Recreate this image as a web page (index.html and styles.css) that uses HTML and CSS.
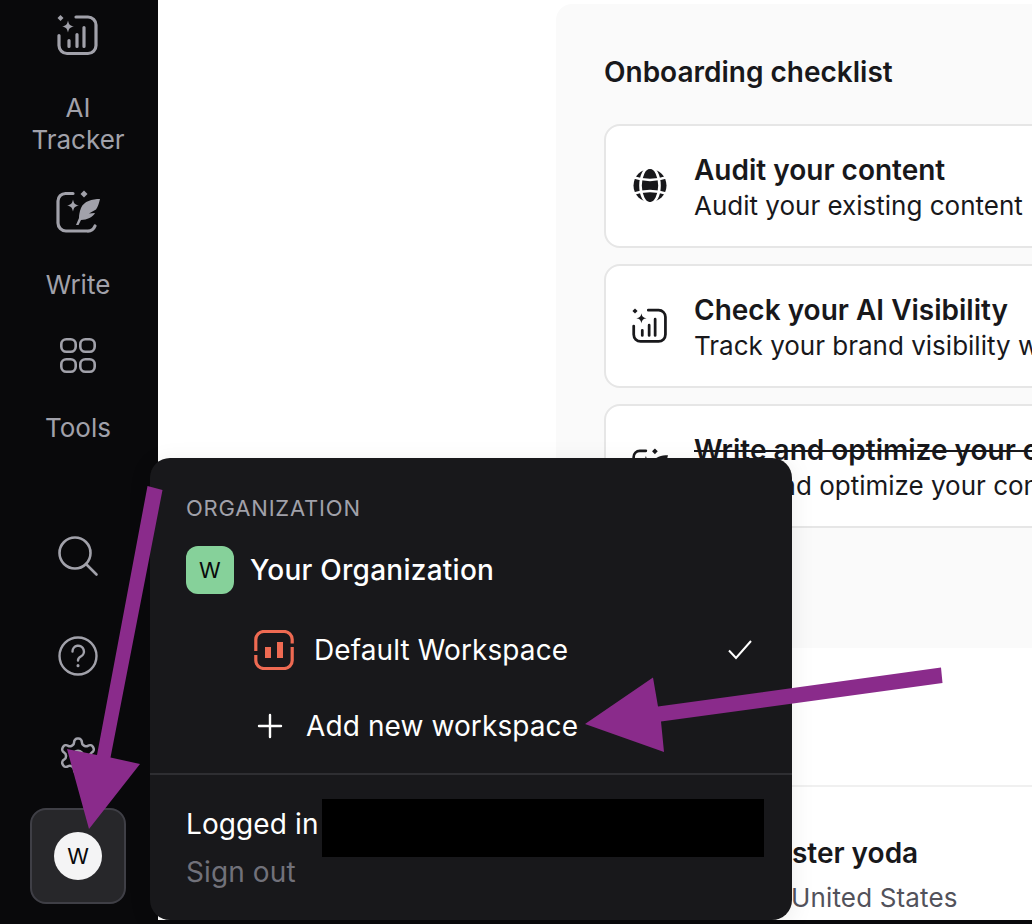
FILE: index.html
```html
<!DOCTYPE html>
<html lang="en">
<head>
<meta charset="utf-8">
<title>Onboarding checklist</title>
<link rel="stylesheet" href="styles.css">
</head>
<body>
<svg class="defs" width="0" height="0" aria-hidden="true">
  <symbol id="i-tracker" viewBox="0 0 42 42">
    <path d="M19 2.500H31a8 8 0 0 1 8 8V31a8 8 0 0 1-8 8H10a8 8 0 0 1-8-8V21" fill="none" stroke="currentColor" stroke-width="3.200" stroke-linecap="round"/>
    <path d="M12 26v6M20 20v12M27 13v19" fill="none" stroke="currentColor" stroke-width="3.200" stroke-linecap="round"/>
    <path d="M11 6c.8 4 2 5.200 6 6-4 .8-5.200 2-6 6-.8-4-2-5.200-6-6 4-.8 5.200-2 6-6z" fill="currentColor"/>
    <path d="M3.500 .5l3 3-3 3-3-3z" fill="currentColor"/>
  </symbol>
  <symbol id="i-write" viewBox="0 0 44 44">
    <path d="M17 3.500H9.500a7.500 7.500 0 0 0-7.500 7.500V33a8 8 0 0 0 8 8h21a8 8 0 0 0 8-5" fill="none" stroke="currentColor" stroke-width="3.200" stroke-linecap="round"/>
    <path d="M17 9.500c.8 4 2 5.200 6 6-4 .8-5.200 2-6 6-.8-4-2-5.200-6-6 4-.8 5.200-2 6-6z" fill="currentColor"/>
    <path d="M28 .5l3.500 3.500-3.500 3.500-3.500-3.500z" fill="currentColor"/>
    <path d="M44 9C36 9 28 11 25 18c-1.500 4-2 7-2 10l-3 7h2.500l2.500-5c6 0 12-3 14-7l-6 .5 7-4c2-3 3-6 4-10.500z" fill="currentColor"/>
  </symbol>
</svg>

<div class="app">
  <aside class="sidebar">
    <nav class="nav">
      <a class="nav-item">
        <svg class="nav-icon" width="42" height="43"><use href="#i-tracker"/></svg>
        <span class="nav-label">AI<br>Tracker</span>
      </a>
      <a class="nav-item">
        <svg class="nav-icon" width="44" height="44"><use href="#i-write"/></svg>
        <span class="nav-label">Write</span>
      </a>
      <a class="nav-item">
        <svg class="nav-icon" width="40" height="42" viewBox="0 0 40 42" fill="none" stroke="currentColor" stroke-width="2.600">
          <rect x="3.300" y="4.300" width="14.400" height="12.400" rx="5"/>
          <rect x="22.300" y="4.300" width="14.400" height="12.400" rx="5"/>
          <rect x="3.300" y="24.300" width="14.400" height="12.400" rx="5"/>
          <rect x="22.300" y="24.300" width="14.400" height="12.400" rx="5"/>
        </svg>
        <span class="nav-label">Tools</span>
      </a>
    </nav>
    <div class="side-tools">
      <svg class="tool-icon" width="42" height="42" viewBox="0 0 42 42" fill="none" stroke="currentColor" stroke-width="2.600" stroke-linecap="round">
        <circle cx="18" cy="18" r="15.500"/><path d="M29 29l10.500 10.500"/>
      </svg>
      <svg class="tool-icon" width="42" height="42" viewBox="0 0 42 42" fill="none" stroke="currentColor" stroke-width="2.400" stroke-linecap="round">
        <circle cx="21" cy="21" r="18.500"/>
        <path d="M15.500 16.500a5.700 5.700 0 1 1 8.300 5c-1.800 1-2.800 2-2.800 4"/>
        <path d="M21 30.500v.2" stroke-width="3"/>
      </svg>
      <svg class="tool-icon" width="42" height="42" viewBox="0 0 24 24" fill="none" stroke="currentColor" stroke-width="1.450">
        <path d="M12.220 2h-.44a2 2 0 0 0-2 2v.18a2 2 0 0 1-1 1.730l-.43.250a2 2 0 0 1-2 0l-.15-.08a2 2 0 0 0-2.730.73l-.22.380a2 2 0 0 0 .73 2.730l.15.100a2 2 0 0 1 1 1.720v.510a2 2 0 0 1-1 1.740l-.15.090a2 2 0 0 0-.73 2.730l.22.380a2 2 0 0 0 2.730.73l.15-.08a2 2 0 0 1 2 0l.43.250a2 2 0 0 1 1 1.730V20a2 2 0 0 0 2 2h.44a2 2 0 0 0 2-2v-.18a2 2 0 0 1 1-1.730l.43-.25a2 2 0 0 1 2 0l.15.08a2 2 0 0 0 2.730-.73l.22-.39a2 2 0 0 0-.73-2.730l-.15-.08a2 2 0 0 1-1-1.740v-.5a2 2 0 0 1 1-1.740l.15-.09a2 2 0 0 0 .73-2.730l-.22-.38a2 2 0 0 0-2.730-.73l-.15.08a2 2 0 0 1-2 0l-.43-.25a2 2 0 0 1-1-1.730V4a2 2 0 0 0-2-2z"/>
        <circle cx="12" cy="12" r="3"/>
      </svg>
      <button class="ws-button"><span class="ws-avatar">W</span></button>
    </div>
  </aside>

  <main class="main">
    <section class="checklist">
      <h2 class="checklist-title">Onboarding checklist</h2>
      <div class="card">
        <svg class="card-icon" width="36" height="36" viewBox="0 0 36 36">
          <circle cx="18" cy="17.500" r="16.500" fill="#18181b"/>
          <g fill="none" stroke="#fff" stroke-width="2.600">
            <ellipse cx="18" cy="17.500" rx="9.500" ry="18"/>
            <path d="M0 9Q18 15 36 9M0 26Q18 20 36 26"/>
          </g>
        </svg>
        <div class="card-text">
          <div class="card-title">Audit your content</div>
          <div class="card-sub">Audit your existing content</div>
        </div>
      </div>
      <div class="card">
        <svg class="card-icon" width="36" height="36"><use href="#i-tracker"/></svg>
        <div class="card-text">
          <div class="card-title">Check your AI Visibility</div>
          <div class="card-sub">Track your brand visibility with AI search engines</div>
        </div>
      </div>
      <div class="card">
        <svg class="card-icon" width="36" height="36"><use href="#i-write"/></svg>
        <div class="card-text">
          <div class="card-title card-done">Write and optimize your content</div>
          <div class="card-sub">Write and optimize your content with AI assistance</div>
        </div>
      </div>
    </section>
    <section class="person">
      <div class="person-name">Master yoda</div>
      <div class="person-loc">United States</div>
    </section>
  </main>

  <div class="popup">
    <div class="popup-top">
      <div class="popup-label">ORGANIZATION</div>
      <div class="org-row">
        <span class="org-tile">W</span>
        <span class="org-name">Your Organization</span>
      </div>
      <div class="ws-row">
        <svg width="40" height="40" viewBox="0 0 40 40" fill="none" stroke="#ee6a52" stroke-width="3.200" stroke-linecap="butt">
          <path d="M1.800 21V9.500a8 8 0 0 1 8-8H30.200a8 8 0 0 1 8 8v4"/>
          <path d="M38.200 17V30.500a8 8 0 0 1-8 8H9.800a8 8 0 0 1-8-8V25"/>
          <path d="M14 17v11M26 12v16" stroke-width="6"/>
        </svg>
        <span class="ws-name">Default Workspace</span>
        <svg class="ws-check" width="26" height="20" viewBox="0 0 26 20" fill="none" stroke="#fff" stroke-width="2">
          <path d="M2 10.500l7 7.500L24 1"/>
        </svg>
      </div>
      <div class="add-row">
        <svg width="26" height="26" viewBox="0 0 26 26" fill="none" stroke="#fff" stroke-width="2.400" stroke-linecap="round">
          <path d="M13 2v22M2 13h22"/>
        </svg>
        <span class="add-text">Add new workspace</span>
      </div>
    </div>
    <div class="popup-bottom">
      <div class="logged-row">
        <span class="logged-text">Logged in</span>
        <span class="redact"></span>
      </div>
      <div class="signout">Sign out</div>
    </div>
  </div>

  <svg class="arrows" width="1032" height="924" viewBox="0 0 1032 924" aria-hidden="true">
    <polygon points="147.500,486 162.500,490 110.500,757.500 140,764 89,829 67,749 97,755" fill="#8a2b8b"/>
    <polygon points="941,667.500 942.500,683 661,721.500 664,752 585,724 653,677.500 658,706.500" fill="#8a2b8b"/>
  </svg>
</div>
</body>
</html>
```

FILE: styles.css
```css
* {
  box-sizing: border-box;
}

html,
body {
  margin: 0;
  padding: 0;
  height: 100%;
}

body {
  background: #09090b;
  font-family: Inter, "Liberation Sans", sans-serif;
  overflow: hidden;
}

.defs {
  position: absolute;
}

.app {
  position: relative;
  display: flex;
  width: 1032px;
  height: 924px;
  overflow: hidden;
}

/* Sidebar */
.sidebar {
  flex: 0 0 158px;
  display: flex;
  flex-direction: column;
  align-items: center;
  padding: 14px 2px 20px 0;
  background: #09090b;
  color: #a1a1aa;
}

.nav {
  display: flex;
  flex-direction: column;
  align-items: center;
  gap: 34px;
}

.nav-item {
  display: flex;
  flex-direction: column;
  align-items: center;
  gap: 35px;
}

.nav-icon {
  display: block;
}

.nav-label {
  font-size: 26px;
  line-height: 32px;
  text-align: center;
}

.side-tools {
  margin-top: auto;
  display: flex;
  flex-direction: column;
  align-items: center;
  gap: 58px;
}

.tool-icon {
  display: block;
}

.ws-button {
  margin-top: -27px;
  width: 96px;
  height: 96px;
  display: flex;
  align-items: center;
  justify-content: center;
  padding: 0;
  background: #27272a;
  border: 2px solid #3f3f46;
  border-radius: 16px;
}

.ws-avatar {
  width: 48px;
  height: 48px;
  display: flex;
  align-items: center;
  justify-content: center;
  border-radius: 50%;
  background: #f4f4f5;
  color: #09090b;
  font: 400 22px Inter, sans-serif;
}

/* Main */
.main {
  flex: 1 1 0;
  min-width: 0;
  height: 920px;
  padding: 4px 0 0 398px;
  background: #fff;
  overflow: hidden;
}

.checklist {
  width: 700px;
  height: 644px;
  padding: 48px 0 0 48px;
  background: #fafafa;
  border-radius: 16px 0 0 0;
}

.checklist-title {
  margin: 0 0 32px;
  font-size: 28px;
  line-height: 40px;
  font-weight: 600;
  color: #18181b;
}

.card {
  display: flex;
  align-items: center;
  gap: 26px;
  width: 640px;
  height: 124px;
  margin-bottom: 16px;
  padding-left: 26px;
  background: #fff;
  border: 2px solid #e6e6e6;
  border-radius: 16px;
  color: #18181b;
}

.card-icon {
  flex: none;
  display: block;
}

.card-text {
  min-width: 0;
  padding-top: 4px;
}

.card-title {
  font-size: 28px;
  line-height: 36px;
  font-weight: 600;
  white-space: nowrap;
}

.card-done {
  text-decoration: line-through;
}

.card-sub {
  font-size: 26px;
  line-height: 36px;
  white-space: nowrap;
}

.person {
  height: 272px;
  margin-top: 137px;
  padding: 48px 0 0 194px;
  border-top: 2px solid #f0f0f0;
  width: 700px;
}

.person-name {
  font-size: 28px;
  line-height: 36px;
  font-weight: 600;
  color: #18181b;
  white-space: nowrap;
}

.person-loc {
  margin-top: 9px;
  padding-left: 41px;
  font-size: 26px;
  line-height: 36px;
  letter-spacing: 0.15px;
  color: #52525b;
  white-space: nowrap;
}

/* Popup */
.popup {
  position: absolute;
  left: 150px;
  top: 458px;
  width: 642px;
  height: 462px;
  background: #18181b;
  border-radius: 20px;
  box-shadow: 0 4px 24px rgba(0, 0, 0, 0.08);
  color: #fff;
  font-size: 28px;
  letter-spacing: 0.1px;
}

.popup-top {
  height: 317px;
  padding: 36px 36px 0;
  border-bottom: 2px solid #2e2e32;
}

.popup-label {
  font-size: 22px;
  line-height: 28px;
  letter-spacing: 0.8px;
  color: #a1a1aa;
}

.org-row {
  display: flex;
  align-items: center;
  gap: 16px;
  margin-top: 24px;
}

.org-tile {
  width: 48px;
  height: 48px;
  display: flex;
  align-items: center;
  justify-content: center;
  border-radius: 12px;
  background: #86d19a;
  color: #09090b;
  font-size: 22px;
}

.org-name {
  font-weight: 500;
  letter-spacing: 0.25px;
}

.ws-row {
  display: flex;
  align-items: center;
  gap: 20px;
  margin-top: 36px;
  margin-left: 68px;
  margin-right: 3px;
}

.ws-check {
  margin-left: auto;
}

.add-row {
  display: flex;
  align-items: center;
  gap: 23px;
  height: 34px;
  margin-top: 39px;
  margin-left: 71px;
}

.popup-bottom {
  padding: 24px 36px 0;
}

.logged-row {
  display: flex;
  align-items: center;
  gap: 3px;
  height: 58px;
  white-space: nowrap;
}

.logged-text {
  margin-bottom: 8px;
}

.redact {
  flex: none;
  width: 442px;
  height: 58px;
  background: #000;
}

.signout {
  margin-top: -1px;
  line-height: 32px;
  color: #71717a;
}

.arrows {
  position: absolute;
  left: 0;
  top: 0;
  pointer-events: none;
}
```
